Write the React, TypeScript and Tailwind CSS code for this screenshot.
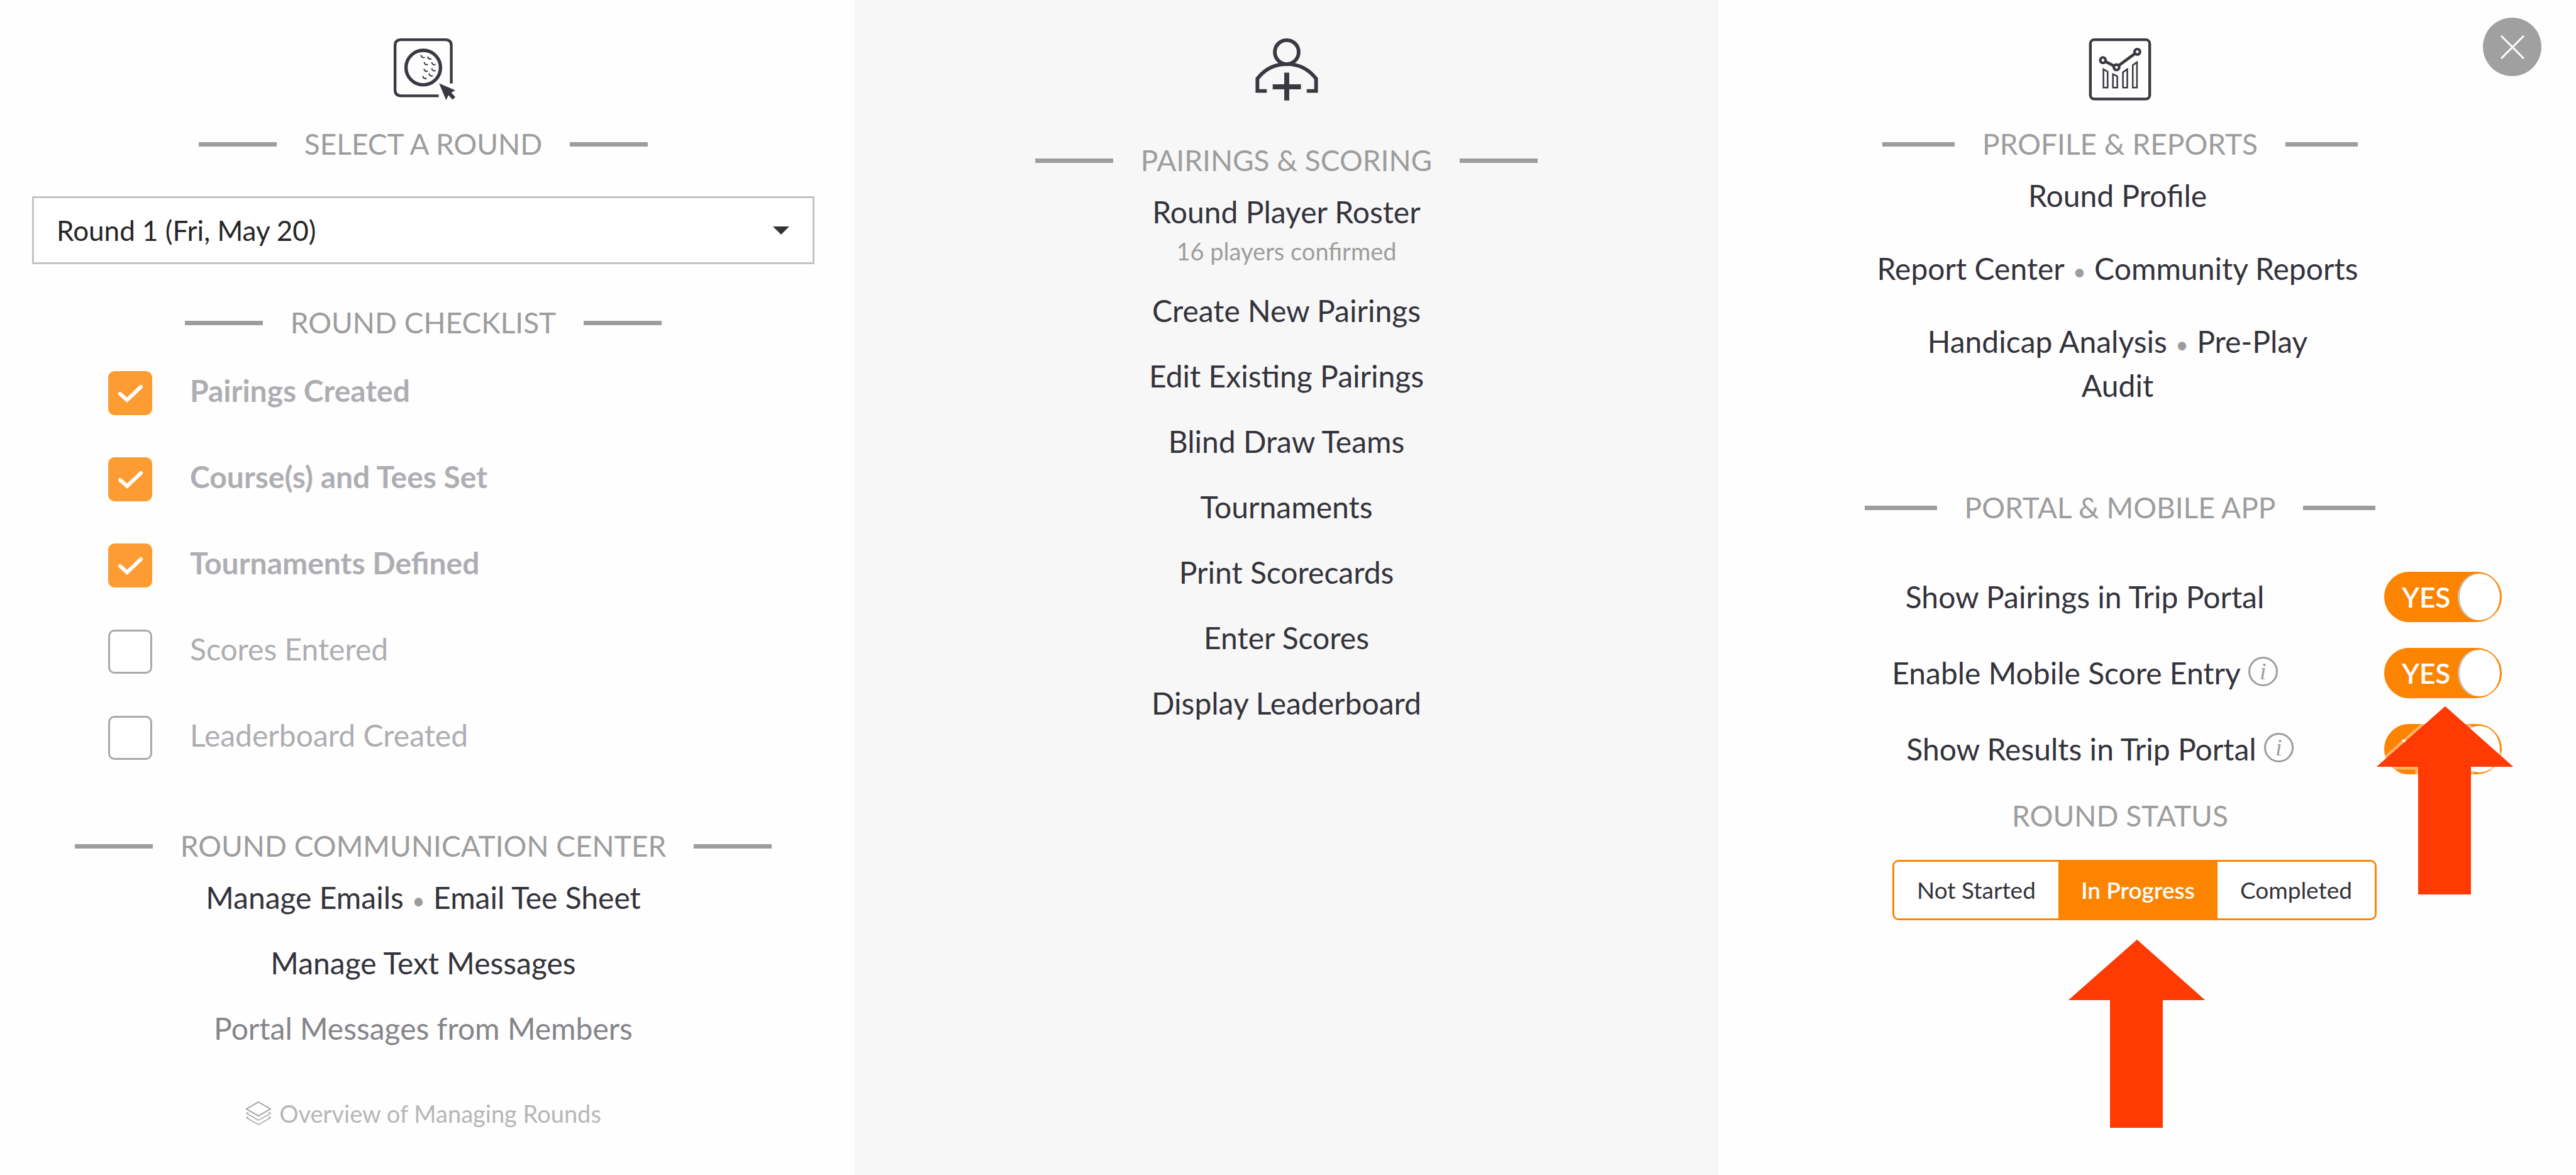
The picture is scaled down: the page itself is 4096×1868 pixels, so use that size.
import clsx from "clsx";
import { ReactNode, useState } from "react";

type ChecklistItem = { id: string; label: string; done: boolean };

const checklistItems: ChecklistItem[] = [
  { id: "pairings", label: "Pairings Created", done: true },
  { id: "courses", label: "Course(s) and Tees Set", done: true },
  { id: "tournaments", label: "Tournaments Defined", done: true },
  { id: "scores", label: "Scores Entered", done: false },
  { id: "leaderboard", label: "Leaderboard Created", done: false },
];

const pairingLinks = [
  "Create New Pairings",
  "Edit Existing Pairings",
  "Blind Draw Teams",
  "Tournaments",
  "Print Scorecards",
  "Enter Scores",
  "Display Leaderboard",
];

const statuses = ["Not Started", "In Progress", "Completed"];

function BallIcon() {
  const dimples = [
    [330, 221],
    [372, 230],
    [350, 265],
    [397, 265],
    [349, 306],
    [397, 303],
    [380, 335],
    [342, 351],
  ];
  return (
    <svg className="size-[102px]" viewBox="145 106 398 398" fill="none" stroke="#3a3941">
      <path
        d="M518 398V163Q518 126 481 126H206Q169 126 169 163V437Q169 474 206 474H440"
        strokeWidth="17"
      />
      <circle cx="344" cy="299" r="107" strokeWidth="21" />
      {dimples.map(([x, y]) => (
        <path key={`${x}-${y}`} d={`M${x} ${y}q2 20 23 15`} strokeWidth="8" />
      ))}
      <path
        d="M442 397L543 440L518 454L543 482L526 498L500 470L486 501Z"
        fill="#3a3941"
        stroke="none"
      />
    </svg>
  );
}

function PlayerIcon() {
  return (
    <svg className="size-[102px]" viewBox="173 106 398 398" fill="none" stroke="#3a3941">
      <circle cx="372" cy="203" r="74" strokeWidth="23" />
      <path
        d="M248 444H190V368C240 302 300 277 372 277C444 277 504 302 554 368V444H496"
        strokeWidth="23"
      />
      <path d="M372 330V503M285 418H460" strokeWidth="31" />
    </svg>
  );
}

function ChartIcon() {
  return (
    <svg className="size-[102px]" viewBox="126 106 398 398" fill="none" stroke="#3a3941">
      <rect x="141" y="126" width="368" height="368" rx="24" strokeWidth="17" />
      <path d="M234 261L288 289M317 286L418 212" strokeWidth="18" />
      <g strokeWidth="16">
        <circle cx="219" cy="253" r="17" />
        <circle cx="303" cy="297" r="17" />
        <circle cx="432" cy="201" r="17" />
      </g>
      <path
        d="M222 309L248 324V423H222ZM281 340L308 353V423H281ZM343 328L370 309V423H343ZM404 284L430 266V423H404Z"
        strokeWidth="10"
      />
    </svg>
  );
}

function LayersIcon() {
  return (
    <svg className="h-[40px] w-[42px]" viewBox="0 0 42 40" fill="none" stroke="#a3a3a3">
      <path d="M21 2L40 13L21 24L2 13Z" strokeWidth="2" />
      <path d="M5 18L2 20L21 31L40 20L37 18M5 25L2 27L21 38L40 27L37 25" strokeWidth="1.5" />
    </svg>
  );
}

function UpArrow() {
  return (
    <svg
      className="h-[299px] w-[217px] overflow-visible"
      viewBox="0 0 217 299"
      fill="#ff3a03"
      aria-hidden="true"
    >
      <path
        d="M109 0L217 96H150V299H66V96H0Z"
        stroke="#ffffff"
        strokeOpacity="0.4"
        strokeWidth="9"
        paintOrder="stroke"
      />
      <path d="M109 0L217 96H150V299H66V96H0Z" />
    </svg>
  );
}

function SectionHeading({
  children,
  className,
  barClassName = "w-[124px]",
}: {
  children: ReactNode;
  className?: string;
  barClassName?: string;
}) {
  return (
    <div className={clsx("flex items-center justify-center gap-11 leading-[70px]", className)}>
      <span className={clsx("h-[7px] bg-[#9d9d9d]", barClassName)} />
      <h2 className="text-[46px] text-[#9d9d9d]">{children}</h2>
      <span className={clsx("h-[7px] bg-[#9d9d9d]", barClassName)} />
    </div>
  );
}

function Dot() {
  return <span className="mx-1 text-[36px] leading-none text-[#9d9d9d]"> • </span>;
}

function InfoButton() {
  return (
    <button
      type="button"
      aria-label="More information"
      className="mb-1.5 flex size-[47px] items-center justify-center rounded-full border-3 border-[#9d9d9d] font-['Liberation_Serif',serif] text-[38px] leading-none text-[#9d9d9d] italic"
    >
      i
    </button>
  );
}

function ToggleRow({
  id,
  label,
  info,
  labelClassName,
  children,
}: {
  id: string;
  label: string;
  info?: boolean;
  labelClassName?: string;
  children?: ReactNode;
}) {
  const [on, setOn] = useState(true);

  return (
    <div className="flex h-20 items-center">
      <div className={clsx("flex flex-1 items-center justify-center gap-3", labelClassName)}>
        <label htmlFor={id}>{label}</label>
        {info && <InfoButton />}
      </div>
      <div className="relative">
        <input
          id={id}
          type="checkbox"
          role="switch"
          checked={on}
          onChange={() => setOn(!on)}
          className="block h-20 w-[187px] appearance-none rounded-full border-3 border-[#fd8401] bg-[#fd8401]"
        />
        <div className="pointer-events-none absolute inset-0 flex items-center justify-between pr-[3px] pl-7 text-[44px] font-semibold text-white">
          <span>{on ? "YES" : "NO"}</span>
          <span className="h-[74px] w-16 rounded-[50%] bg-white shadow-[-3px_0_1px_#c9c4bd]" />
        </div>
        {children}
      </div>
    </div>
  );
}

export default function App() {
  const [checklist, setChecklist] = useState(checklistItems);
  const [status, setStatus] = useState("In Progress");

  function handleCheck(id: string) {
    setChecklist(
      checklist.map((item) => (item.id === id ? { ...item, done: !item.done } : item))
    );
  }

  return (
    <main className="relative grid min-h-screen grid-cols-[1359fr_1373fr_1364fr] bg-[#fefefe] font-[Lato,'Liberation_Sans',sans-serif] text-[48px] leading-[70px] text-[#34333b]">
      <section className="flex flex-col pt-[58px] pr-16 pl-[51px]">
        <div className="flex justify-center">
          <BallIcon />
        </div>
        <SectionHeading className="mt-[34px]">SELECT A ROUND</SectionHeading>
        <div className="relative mt-12">
          <select
            aria-label="Round"
            className="block h-[108px] w-full appearance-none border-3 border-[#c2c2c2] bg-white px-9 text-[44px] text-[#262626]"
          >
            <option>Round 1 (Fri, May 20)</option>
          </select>
          <svg
            className="pointer-events-none absolute top-12 right-10 h-[13px] w-[26px]"
            viewBox="0 0 26 13"
            fill="#333333"
          >
            <path d="M0 0H26L13 13Z" />
          </svg>
        </div>

        <SectionHeading className="mt-[58px]">ROUND CHECKLIST</SectionHeading>
        <ul className="mt-[42px] flex flex-col gap-[67px] pl-[121px] text-[#aeaeb2]">
          {checklist.map((item) => (
            <li key={item.id} className="flex items-start gap-[60px]">
              <div className="relative">
                <input
                  id={item.id}
                  type="checkbox"
                  checked={item.done}
                  onChange={() => handleCheck(item.id)}
                  className="block size-[70px] appearance-none rounded-[10px] border-3 border-[#a9a9a9] bg-white checked:border-[#fd9c33] checked:bg-[#fd9c33]"
                />
                {item.done && (
                  <svg
                    className="pointer-events-none absolute inset-0 size-[70px]"
                    viewBox="0 0 70 70"
                    fill="none"
                    stroke="#ffffff"
                    strokeWidth="6"
                    strokeLinecap="round"
                  >
                    <path d="M19 36L30 46L52 25" />
                  </svg>
                )}
              </div>
              <label
                htmlFor={item.id}
                className={clsx("leading-[62px]", item.done && "font-bold")}
              >
                {item.label}
              </label>
            </li>
          ))}
        </ul>

        <SectionHeading className="mt-[102px]">ROUND COMMUNICATION CENTER</SectionHeading>
        <ul className="mt-3 flex flex-col gap-[34px] text-center">
          <li>
            <a href="#emails">Manage Emails</a>
            <Dot />
            <a href="#tee-sheet">Email Tee Sheet</a>
          </li>
          <li>
            <a href="#texts">Manage Text Messages</a>
          </li>
          <li>
            <a href="#portal-messages" className="text-[#858589]">
              Portal Messages from Members
            </a>
          </li>
        </ul>
        <a
          href="#overview"
          className="mt-[77px] flex items-center justify-center gap-3 text-[38px] leading-[46px] text-[#b6b6b6]"
        >
          <LayersIcon />
          Overview of Managing Rounds
        </a>
      </section>

      <section className="flex flex-col bg-[#f7f7f7] pt-[58px] text-center">
        <div className="flex justify-center">
          <PlayerIcon />
        </div>
        <SectionHeading className="mt-[60px]">PAIRINGS &amp; SCORING</SectionHeading>
        <a href="#roster" className="mt-3">
          Round Player Roster
        </a>
        <p className="text-[38px] leading-[54px] text-[#9d9d9d]">16 players confirmed</p>
        <ul className="mt-[33px] flex flex-col gap-[34px]">
          {pairingLinks.map((link) => (
            <li key={link}>
              <a href="#pairings">{link}</a>
            </li>
          ))}
        </ul>
      </section>

      <section className="flex flex-col pt-[58px]">
        <div className="flex flex-col items-center pr-[86px] text-center">
          <ChartIcon />
          <SectionHeading className="mt-[34px]" barClassName="w-[115px]">
            PROFILE &amp; REPORTS
          </SectionHeading>
          <ul className="mt-3 flex flex-col items-center gap-[46px] pr-2">
            <li>
              <a href="#profile">Round Profile</a>
            </li>
            <li>
              <a href="#reports">Report Center</a>
              <Dot />
              <a href="#community">Community Reports</a>
            </li>
            <li>
              <a href="#handicap">Handicap Analysis</a>
              <Dot />
              <a href="#audit">
                Pre-Play
                <br />
                Audit
              </a>
            </li>
          </ul>
          <SectionHeading className="mt-[124px]" barClassName="w-[115px]">
            PORTAL &amp; MOBILE APP
          </SectionHeading>
        </div>

        <div className="mt-[67px] flex flex-col gap-[41px] pr-[118px] pl-[107px]">
          <ToggleRow id="show-pairings" label="Show Pairings in Trip Portal" />
          <ToggleRow id="mobile-scores" label="Enable Mobile Score Entry" info />
          <ToggleRow
            id="show-results"
            label="Show Results in Trip Portal"
            labelClassName="pl-12"
            info
          >
            <div className="pointer-events-none absolute -top-7 -left-3">
              <UpArrow />
            </div>
          </ToggleRow>
        </div>

        <h2 className="mt-[31px] pr-[86px] text-center text-[46px] text-[#9d9d9d]">
          ROUND STATUS
        </h2>
        <div className="mt-[35px] flex justify-center pr-10">
          <div className="relative">
            <div className="flex h-24 overflow-hidden rounded-[10px] border-3 border-[#fd8401] text-[37px]">
              {statuses.map((name) => (
                <button
                  key={name}
                  type="button"
                  aria-pressed={status === name}
                  onClick={() => setStatus(name)}
                  className={clsx(
                    "px-9",
                    status === name ? "bg-[#fd8401] font-semibold text-white" : "bg-white"
                  )}
                >
                  {name}
                </button>
              ))}
            </div>
            <div className="pointer-events-none absolute top-[127px] left-[280px]">
              <UpArrow />
            </div>
          </div>
        </div>
      </section>

      <button
        type="button"
        aria-label="Close"
        className="absolute top-7 right-[55px] flex size-[93px] items-center justify-center rounded-full bg-[#a0a0a0]"
      >
        <svg className="size-[38px]" viewBox="0 0 38 38" stroke="#ffffff" strokeWidth="3">
          <path d="M1 1L37 37M37 1L1 37" />
        </svg>
      </button>
    </main>
  );
}
